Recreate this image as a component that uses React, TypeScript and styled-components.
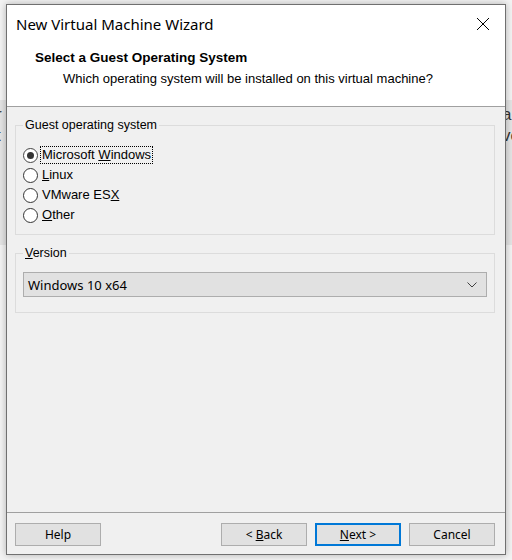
import React, {useState} from 'react';
import styled, {createGlobalStyle} from "styled-components";

const GlobalStyle = createGlobalStyle`
  html, body {
    margin: 0;
    padding: 0;
    background: #f2f2f2;
  }
  * {
    box-sizing: border-box;
  }
`

const osOptions = [
    {id: 'windows', before: 'Microsoft ', key: 'W', after: 'indows'},
    {id: 'linux', before: '', key: 'L', after: 'inux'},
    {id: 'esx', before: 'VMware ES', key: 'X', after: ''},
    {id: 'other', before: '', key: 'O', after: 'ther'},
]

export default function App() {
    const [os, setOs] = useState('windows')

    return (
        <Desktop>
            <GlobalStyle/>
            <BackdropBand>
                <BackdropText>r<br/>t</BackdropText>
                <BackdropText>a<br/>ve</BackdropText>
            </BackdropBand>
            <Window>
                <TitleBar>
                    <WindowTitle>New Virtual Machine Wizard</WindowTitle>
                    <CloseButton aria-label="Close">
                        <svg width="14" height="14" viewBox="0 0 14 14">
                            <path d="M1 1 L13 13 M13 1 L1 13" stroke="#000" strokeWidth="1" fill="none"/>
                        </svg>
                    </CloseButton>
                </TitleBar>
                <Header>
                    <HeaderTitle>Select a Guest Operating System</HeaderTitle>
                    <HeaderSub>Which operating system will be installed on this virtual machine?</HeaderSub>
                </Header>
                <Body>
                    <Group $height={117}>
                        <Legend>Guest operating system</Legend>
                        <RadioList>
                            {osOptions.map(o =>
                                <RadioRow key={o.id} onClick={() => setOs(o.id)}>
                                    <RadioCircle $checked={os === o.id}/>
                                    <RadioLabel $focused={os === o.id}>
                                        {o.before}<u>{o.key}</u>{o.after}
                                    </RadioLabel>
                                </RadioRow>
                            )}
                        </RadioList>
                    </Group>
                    <Group $height={67}>
                        <Legend><u>V</u>ersion</Legend>
                        <Select>
                            <span>Windows 10 x64</span>
                            <svg width="10" height="6" viewBox="0 0 10 6">
                                <path d="M0.5 0.5 L5 5 L9.5 0.5" stroke="#404040" strokeWidth="1" fill="none"/>
                            </svg>
                        </Select>
                    </Group>
                </Body>
                <Footer>
                    <Button>Help</Button>
                    <ButtonGroup>
                        <Button>&lt; <u>B</u>ack</Button>
                        <Button $primary><u>N</u>ext &gt;</Button>
                        <Button>Cancel</Button>
                    </ButtonGroup>
                </Footer>
            </Window>
        </Desktop>
    )
}

const Desktop = styled.div`
  position: relative;
  width: 512px;
  height: 560px;
  padding: 4px 0 0 6px;
  overflow: hidden;
  font-family: "Liberation Sans", Arial, sans-serif;
  background: #f3f3f3;
`

const BackdropBand = styled.div`
  position: absolute;
  left: 0;
  right: 0;
  top: 100px;
  height: 145px;
  background: #e4e4e4;
  display: flex;
  justify-content: space-between;
  padding: 4px 0 0 0;
  z-index: 0;
`

const BackdropText = styled.div`
  font-size: 17px;
  line-height: 21px;
  color: #333;
  &:first-child {
    margin-left: -4px;
  }
  &:last-child {
    margin-right: -8px;
  }
`

const Window = styled.div`
  position: relative;
  z-index: 1;
  width: 500px;
  height: 551px;
  border: 1px solid #707070;
  background: #f0f0f0;
  box-shadow: 0 0 7px rgba(0, 0, 0, 0.28);
  display: flex;
  flex-direction: column;
`

const TitleBar = styled.div`
  display: flex;
  align-items: center;
  justify-content: space-between;
  height: 37px;
  padding: 0 15px 0 9px;
  background: #fff;
`

const WindowTitle = styled.div`
  font-family: "Noto Sans", "Open Sans", sans-serif;
  font-size: 15px;
  color: #000;
`

const CloseButton = styled.button`
  border: none;
  background: transparent;
  padding: 0;
  width: 14px;
  height: 14px;
  display: flex;
`

const Header = styled.div`
  background: #fff;
  height: 65px;
  padding: 8px 0 0 28px;
  border-bottom: 1px solid #a0a0a0;
`

const HeaderTitle = styled.div`
  font-size: 13.5px;
  font-weight: bold;
  color: #000;
  line-height: 16px;
`

const HeaderSub = styled.div`
  font-size: 13px;
  color: #000;
  line-height: 16px;
  margin: 5px 0 0 28px;
`

const Body = styled.div`
  flex: 1;
  padding: 11px 10px 0 8px;
  display: flex;
  flex-direction: column;
  gap: 11px;
`

const Group = styled.fieldset<{ $height: number }>`
  margin: 0;
  height: ${p => p.$height}px;
  border: 1px solid #dcdcdc;
  padding: 0 7px;
`

const Legend = styled.legend`
  font-size: 12.5px;
  color: #000;
  padding: 0 2px;
  margin-left: 0;
  line-height: 14px;
`

const RadioList = styled.div`
  display: flex;
  flex-direction: column;
  gap: 4px;
  padding-top: 15px;
`

const RadioRow = styled.div`
  display: flex;
  align-items: center;
  gap: 4px;
  height: 16px;
  cursor: default;
`

const RadioCircle = styled.span<{ $checked: boolean }>`
  position: relative;
  width: 15px;
  height: 15px;
  border-radius: 50%;
  border: 1px solid ${p => p.$checked ? '#444' : '#333'};
  background: #fff;
  flex-shrink: 0;
  &::after {
    content: '';
    display: ${p => p.$checked ? 'block' : 'none'};
    position: absolute;
    left: 3px;
    top: 3px;
    width: 7px;
    height: 7px;
    border-radius: 50%;
    background: #333;
  }
`

const RadioLabel = styled.span<{ $focused: boolean }>`
  font-size: 13px;
  color: #000;
  line-height: 16px;
  padding: 0 1px;
  margin-left: -1px;
  outline: ${p => p.$focused ? '1px dotted #000' : 'none'};
  outline-offset: 0;
`

const Select = styled.div`
  margin-top: 12px;
  height: 25px;
  display: flex;
  align-items: center;
  justify-content: space-between;
  padding: 0 9px 0 4px;
  background: #e1e1e1;
  border: 1px solid #adadad;
  font-family: "Noto Sans", "Open Sans", sans-serif;
  font-size: 13px;
  color: #000;
`

const Footer = styled.div`
  height: 42px;
  border-top: 1px solid #a0a0a0;
  display: flex;
  align-items: flex-start;
  justify-content: space-between;
  padding: 10px 10px 0 8px;
`

const ButtonGroup = styled.div`
  display: flex;
  gap: 8px;
`

const Button = styled.button<{ $primary?: boolean }>`
  width: 86px;
  height: 23px;
  font-family: "Noto Sans", "Open Sans", sans-serif;
  font-size: 12px;
  color: #000;
  background: #e1e1e1;
  border: ${p => p.$primary ? '2px solid #0078d7' : '1px solid #adadad'};
  padding: 0;
  border-radius: 0;
`
